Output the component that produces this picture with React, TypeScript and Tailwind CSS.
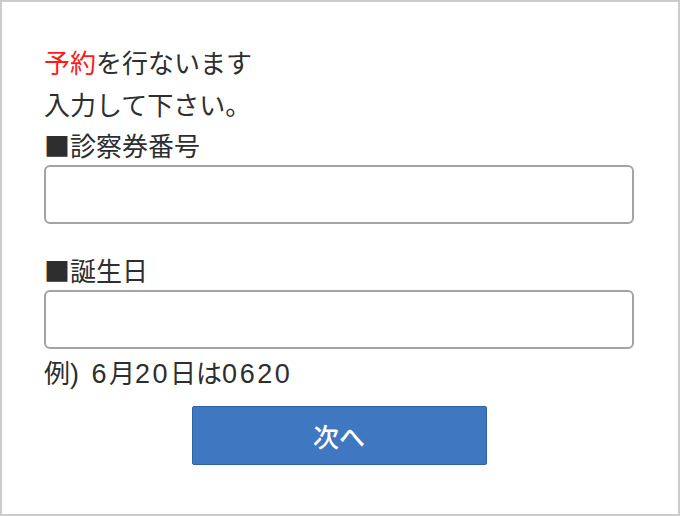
import React from 'react';

const font = { fontFamily: '"Noto Sans CJK JP", "Noto Sans", sans-serif' };
const latin = { fontFamily: '"Liberation Sans", "Noto Sans CJK JP", sans-serif' };

export default function App() {
  return (
    <div
      style={font}
      className="w-[680px] h-[516px] border-2 border-[#cccccc] bg-white text-[#2e2e2e] pt-[39px] pl-[42px] text-[26px] leading-[41px]"
    >
      <p className="leading-[42px]">
        <span className="text-[#ff1a1a]">予約</span>を行ないます
      </p>
      <p>入力して下さい。</p>
      <label className="block">■診察券番号</label>
      <input
        type="text"
        className="block w-[590px] h-[59px] rounded-[6px] border-2 border-[#a3a3a3] bg-white outline-none"
      />
      <label className="block mt-[25px]">■誕生日</label>
      <input
        type="text"
        className="block w-[590px] h-[59px] rounded-[6px] border-2 border-[#a3a3a3] bg-white outline-none"
      />
      <p className="mt-[2px]">
        例<span style={latin} className="text-[27px] tracking-[2.5px]">) 6</span>月<span style={latin} className="text-[27px] tracking-[2.5px]">20</span>日は<span style={latin} className="text-[27px] tracking-[2.5px]">0620</span>
      </p>
      <div className="w-[590px] flex justify-center mt-[11px]">
        <button className="w-[295px] h-[59px] bg-[#3f78c0] border border-[#2f63a8] rounded-[2px] text-white text-[26px] font-medium">
          次へ
        </button>
      </div>
    </div>
  );
}
